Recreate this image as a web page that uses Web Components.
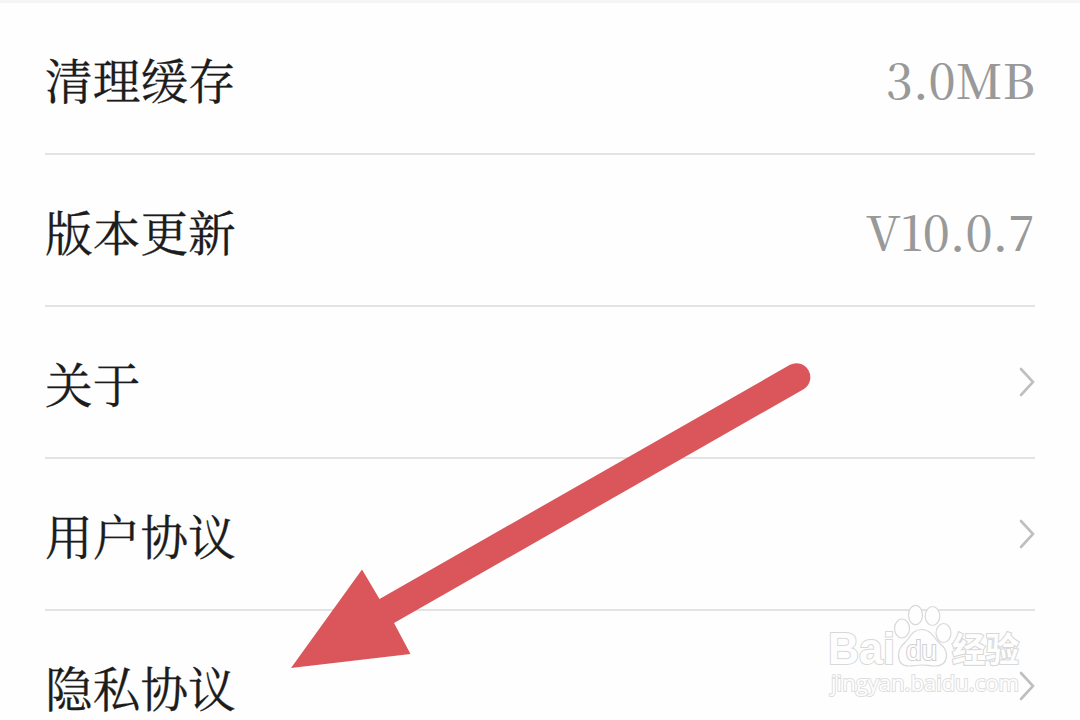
<!DOCTYPE html>
<html lang="zh-CN">
<head>
  <meta charset="UTF-8">
  <title>设置</title>
  <style>
    * {
      margin: 0;
    }

    html,
    body {
      height: 100%;
      overflow: hidden;
      background: #fefefe;
    }
  </style>
</head>
<body>
  <settings-page>
    <setting-item label="清理缓存">3.0MB</setting-item>
    <setting-item label="版本更新">V10.0.7</setting-item>
    <setting-item label="关于" link></setting-item>
    <setting-item label="用户协议" link></setting-item>
    <setting-item label="隐私协议" link></setting-item>
    <site-watermark slot="overlay"></site-watermark>
    <pointer-arrow slot="overlay"></pointer-arrow>
  </settings-page>

  <script>
    class SettingsPage extends HTMLElement {
      constructor() {
        super();
        this.shadowDOM = this.attachShadow({ mode: 'open' });
      }

      connectedCallback() {
        this.render();
      }

      render() {
        this.shadowDOM.innerHTML = `
          <style>
            :host {
              display: block;
              position: relative;
              box-sizing: border-box;
              height: 720px;
              overflow: hidden;
              border-top: 3px solid #f5f5f5;
              font-family: "Noto Serif CJK SC", "Noto Sans CJK SC", serif;
            }

            .list {
              display: flex;
              flex-direction: column;
              padding: 0 45px;
            }
          </style>

          <div class="list"><slot></slot></div>
          <slot name="overlay"></slot>
        `;
      }
    }

    class SettingItem extends HTMLElement {
      constructor() {
        super();
        this.shadowDOM = this.attachShadow({ mode: 'open' });
      }

      connectedCallback() {
        this.render();
      }

      render() {
        const arrow = `
          <svg width="20" height="34" viewBox="0 0 20 34">
            <path d="M6 4 L18 17 L6 30" fill="none" stroke="#bfbfbf" stroke-width="2.6" stroke-linecap="round" />
          </svg>
        `;

        this.shadowDOM.innerHTML = `
          <style>
            :host {
              display: flex;
              flex-shrink: 0;
              align-items: center;
              justify-content: space-between;
              box-sizing: border-box;
              height: 152px;
              border-bottom: 2px solid #e3e3e3;
              line-height: 60px;
            }

            .label {
              padding-top: 2px;
              font-size: 47.7px;
              -webkit-text-stroke: 0.3px #1c1c1c;
              color: #1c1c1c;
            }

            .value {
              padding-top: 2px;
              font-size: 47.7px;
              font-weight: 500;
              font-kerning: none;
              color: #999;
            }

            svg {
              display: block;
            }
          </style>

          <span class="label">${this.getAttribute('label')}</span>
          ${this.hasAttribute('link') ? arrow : '<span class="value"><slot></slot></span>'}
        `;
      }
    }

    class SiteWatermark extends HTMLElement {
      constructor() {
        super();
        this.shadowDOM = this.attachShadow({ mode: 'open' });
      }

      connectedCallback() {
        this.render();
      }

      render() {
        this.shadowDOM.innerHTML = `
          <style>
            :host {
              position: absolute;
              left: 820px;
              top: 597px;
            }

            svg {
              display: block;
            }

            text {
              font-family: "Liberation Sans", "Noto Sans CJK SC", sans-serif;
              paint-order: stroke;
            }

            .url {
              font-family: "Open Sans", "Noto Sans", sans-serif;
            }
          </style>

          <svg width="215" height="115" viewBox="820 600 215 115" fill="#fefefe" stroke="#d8d8d8" stroke-width="1.2">
            <ellipse cx="915.5" cy="615" rx="7" ry="9.7" />
            <ellipse cx="932.5" cy="616" rx="7.3" ry="9.5" />
            <ellipse cx="902" cy="628.5" rx="7.5" ry="9.5" />
            <ellipse cx="943.5" cy="633" rx="7.5" ry="9.5" />
            <path d="M922 629.5 C929 629.5 933 635 936.5 640 C941 645 947 648 946.5 656 C946 663 942 666 935 666 C929 666 927 665 922 665 C917 665 914 666 909 666 C902 666 898.5 662 898.5 655 C898.5 647 904 644 908 639 C912 633 915 629.5 922 629.5 Z" />
            <text x="828" y="664" font-size="44" font-weight="700" stroke-width="2" textLength="67" lengthAdjust="spacingAndGlyphs">Bai</text>
            <text x="906" y="659.5" font-size="27" stroke="#d0d0d0" stroke-width="2" textLength="31" lengthAdjust="spacingAndGlyphs">du</text>
            <text x="952" y="662" font-size="34" font-weight="700" stroke-width="2.2" textLength="67" lengthAdjust="spacingAndGlyphs">经验</text>
            <text class="url" x="831" y="690.5" font-size="22" stroke="#dedede" stroke-width="2" textLength="188" lengthAdjust="spacingAndGlyphs">jingyan.baidu.com</text>
          </svg>
        `;
      }
    }

    class PointerArrow extends HTMLElement {
      constructor() {
        super();
        this.shadowDOM = this.attachShadow({ mode: 'open' });
      }

      connectedCallback() {
        this.render();
      }

      render() {
        this.shadowDOM.innerHTML = `
          <style>
            :host {
              position: absolute;
              left: 280px;
              top: 347px;
            }

            svg {
              display: block;
            }
          </style>

          <svg width="540" height="330" viewBox="280 350 540 330" fill="#da565b">
            <path d="M291 668 L362 569.5 L379.5 599 L790 364.8 A14 14 0 0 1 804 389 L394 623 L410.5 654 Z" />
          </svg>
        `;
      }
    }

    customElements.define('settings-page', SettingsPage);
    customElements.define('setting-item', SettingItem);
    customElements.define('site-watermark', SiteWatermark);
    customElements.define('pointer-arrow', PointerArrow);
  </script>
</body>
</html>
